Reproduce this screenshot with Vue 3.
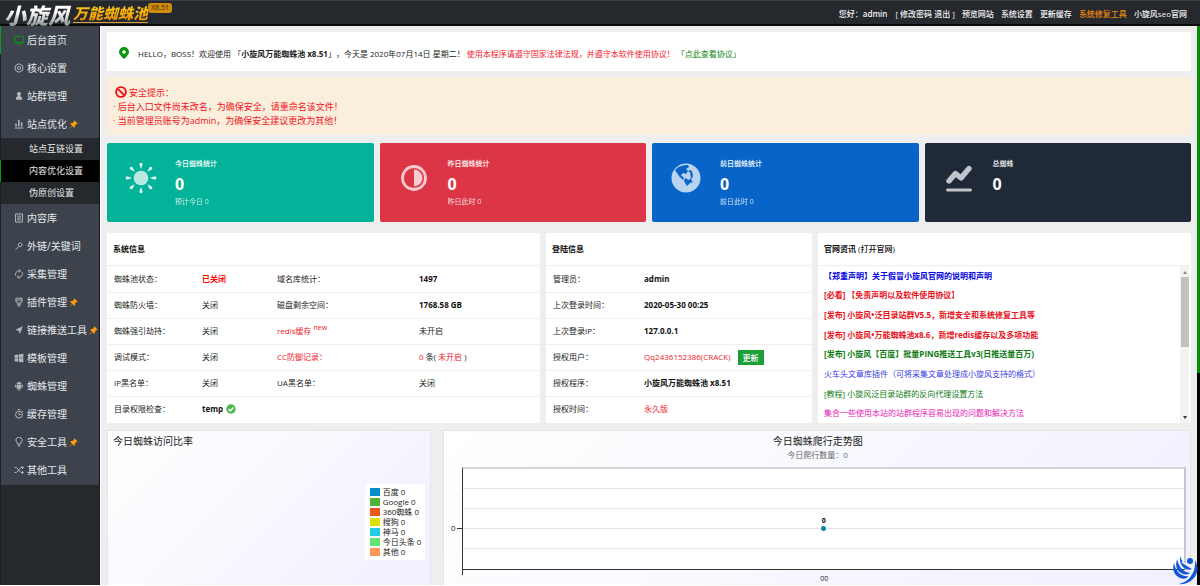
<script setup>
const menu = [
  { text: '后台首页', icon: 'screen', on: true },
  { text: '核心设置', icon: 'hex' },
  { text: '站群管理', icon: 'user' },
  { text: '站点优化', icon: 'bars', pin: true, children: ['站点互链设置', '内容优化设置', '伪原创设置'] },
  { text: '内容库', icon: 'doc' },
  { text: '外链/关键词', icon: 'key' },
  { text: '采集管理', icon: 'cycle' },
  { text: '插件管理', icon: 'plug', pin: true },
  { text: '链接推送工具', icon: 'send', pin: true },
  { text: '模板管理', icon: 'windows' },
  { text: '蜘蛛管理', icon: 'android' },
  { text: '缓存管理', icon: 'timer' },
  { text: '安全工具', icon: 'bulb', pin: true },
  { text: '其他工具', icon: 'shuffle' },
]

const stroked = {
  screen: 'M1 2H15V12H1ZM4 14.5H12',
  hex: 'M8 1L14 4.5V11.5L8 15L2 11.5V4.5ZM8 5.5A2.5 2.5 0 1 0 8 10.5A2.5 2.5 0 1 0 8 5.5',
  doc: 'M2.5 1.5H13.5V14.5H2.5ZM5 5H11M5 8H11M5 11H11',
  key: 'M10 3A3 3 0 1 1 10 9A3 3 0 1 1 10 3M8 8.5L2.5 14',
  cycle: 'M3 11A5.5 5.5 0 0 1 8 3H10M8 0.5L10.5 3L8 5.5M13 5A5.5 5.5 0 0 1 8 13H6M8 10.5L5.5 13L8 15.5',
  plug: 'M3 2H13V6Q13 10 8 10Q3 10 3 6ZM3 5H13M6 10V13H10V10M8 13V16',
  timer: 'M8 3.5A5.5 5.5 0 1 1 8 14.5A5.5 5.5 0 1 1 8 3.5M6 1H10M8 6V9H11M13 3L14.5 4.5',
  bulb: 'M5.5 11Q5.5 9.5 4 8A5 5 0 1 1 12 8Q10.5 9.5 10.5 11ZM6 13H10M7 15H9',
  shuffle: 'M1 4H4L11 12H15M1 12H4L11 4H15M12.5 1.5L15 4L12.5 6.5M12.5 9.5L15 12L12.5 14.5',
}
const filled = {
  user: 'M8 1.5A3.2 3.2 0 0 1 10 7.2V8.5Q13 9 13 12V14H3V12Q3 9 6 8.5V7.2A3.2 3.2 0 0 1 8 1.5Z',
  bars: 'M2 7H4.5V12H2ZM6.5 1H9V12H6.5ZM11 5H13.5V12H11ZM1 13.5H15V15H1Z',
  send: 'M14 2L9.5 14.5L7.5 9L2 7.5Z',
  windows: 'M1 3L7 2.2V7.5H1ZM8 2L15 1V7.5H8ZM1 8.5H7V13.8L1 13ZM8 8.5H15V15L8 14Z',
  android: 'M4 5Q4 1.5 8 1.5Q12 1.5 12 5ZM4 6H12V12H10V15H8.5V12H7.5V15H6V12H4ZM1.5 6H3V10.5H1.5ZM13 6H14.5V10.5H13Z',
}

const stats = [
  { title: '今日蜘蛛统计', value: 0, note: '预计今日 0', tone: 'teal', icon: 'sun' },
  { title: '昨日蜘蛛统计', value: 0, note: '昨日此时 0', tone: 'red', icon: 'half' },
  { title: '前日蜘蛛统计', value: 0, note: '前日此时 0', tone: 'blue', icon: 'globe' },
  { title: '总蜘蛛', value: 0, note: '', tone: 'navy', icon: 'line' },
]
const rays = [0, 45, 90, 135, 180, 225, 270, 315]

const news = [
  { text: '【郑重声明】关于假冒小旋风官网的说明和声明', tone: 'n-blue', bold: true },
  { text: '[必看] 【免责声明以及软件使用协议】', tone: 'n-red', bold: true },
  { text: '[发布] 小旋风•泛目录站群V5.5，新增安全和系统修复工具等', tone: 'n-red', bold: true },
  { text: '[发布] 小旋风•万能蜘蛛池x8.6，新增redis缓存以及多项功能', tone: 'n-red', bold: true },
  { text: '[发布] 小旋风【百度】批量PING推送工具v3(日推送量百万)', tone: 'n-green', bold: true },
  { text: '火车头文章库插件（可将采集文章处理成小旋风支持的格式）', tone: 'n-indigo' },
  { text: '[教程] 小旋风泛目录站群的反向代理设置方法', tone: 'n-green' },
  { text: '集合一些使用本站的站群程序容易出现的问题和解决方法', tone: 'n-pink' },
]

const legend = [
  { name: '百度', color: '#058dc7' },
  { name: 'Google', color: '#50b432' },
  { name: '360蜘蛛', color: '#ed561b' },
  { name: '搜狗', color: '#dddf00' },
  { name: '神马', color: '#24cbe5' },
  { name: '今日头条', color: '#64e572' },
  { name: '其他', color: '#ff9655' },
]
</script>

<template>
  <div class="page">
    <header class="top">
      <a class="logo" href="#">
        <span class="logo-main">小旋风</span>
        <span class="logo-sub">万能蜘蛛池</span>
        <span class="version">X8.51</span>
      </a>
      <nav class="top-nav">
        <span class="hello">您好：<b>admin</b></span>
        <span>[ <a href="#">修改密码</a> <a href="#">退出</a> ]</span>
        <a href="#">预览网站</a>
        <a href="#">系统设置</a>
        <a href="#">更新缓存</a>
        <a href="#" class="orange">系统修复工具</a>
        <a href="#">小旋风seo官网</a>
      </nav>
    </header>

    <div class="body">
      <aside class="side">
        <nav class="menu">
          <template v-for="m in menu" :key="m.text">
            <a href="#" class="item" :class="{ on: m.on }">
              <svg class="ico" viewBox="0 0 16 16" aria-hidden="true">
                <path v-if="stroked[m.icon]" :d="stroked[m.icon]" fill="none" stroke="currentColor" stroke-width="1.6" />
                <path v-else :d="filled[m.icon]" fill="currentColor" />
              </svg>
              <span>{{ m.text }}</span>
              <svg v-if="m.pin" class="pin" viewBox="0 0 16 16" aria-hidden="true">
                <path d="M9.5 0.5L15.5 6.5L14 7.5L13 7L10.5 10Q11 12 9.5 14L6 10.5L1 15.5L0.5 15L5.5 10L2 6.5Q4 5 6 5.5L9 3L8.5 2Z" fill="#ff9c0a" />
              </svg>
            </a>
            <div v-if="m.children" class="sub">
              <a v-for="(c, i) in m.children" :key="c" href="#" :class="{ active: i === 1 }">{{ c }}</a>
            </div>
          </template>
        </nav>
      </aside>

      <main class="main">
        <section class="welcome">
          <svg class="place" viewBox="0 0 20 24" aria-hidden="true">
            <path fill-rule="evenodd" d="M10 0A10 10 0 0 1 20 10Q20 15 10 24Q0 15 0 10A10 10 0 0 1 10 0ZM10 6.5A3.5 3.5 0 1 0 10 13.5A3.5 3.5 0 1 0 10 6.5Z" fill="#0a9410" />
          </svg>
          <p>HELLO，BOSS！欢迎使用 「<b>小旋风万能蜘蛛池 x8.51</b>」，今天是 2020年07月14日 星期二！ <span class="red-text">使用本程序请遵守国家法律法规，并遵守本软件使用协议！</span> <a href="#" class="green-text">「点此查看协议」</a></p>
        </section>

        <section class="alert">
          <p class="alert-title">
            <svg viewBox="0 0 16 16" aria-hidden="true">
              <path d="M8 1.5A6.5 6.5 0 1 1 8 14.5A6.5 6.5 0 1 1 8 1.5M3.5 3.5L12.5 12.5" fill="none" stroke="#f01018" stroke-width="2.6" />
            </svg>
            安全提示：
          </p>
          <p>· 后台入口文件尚未改名，为确保安全，请重命名该文件！</p>
          <p>· 当前管理员账号为admin，为确保安全建议更改为其他！</p>
        </section>

        <section class="stats">
          <article v-for="s in stats" :key="s.title" class="stat" :class="s.tone">
            <svg class="stat-ico" viewBox="0 0 32 32" aria-hidden="true">
              <g v-if="s.icon === 'sun'" fill="#fff">
                <circle cx="16" cy="16" r="7.3" opacity="0.72" />
                <path v-for="r in rays" :key="r" d="M16 7L14.6 3A1.6 1.6 0 1 1 17.4 3Z" :transform="`rotate(${r} 16 16)`" opacity="0.9" />
              </g>
              <g v-else-if="s.icon === 'half'" opacity="0.75">
                <circle cx="16" cy="16" r="11.5" fill="none" stroke="#fff" stroke-width="2.8" />
                <path d="M16 7.5A8.5 8.5 0 0 1 16 24.5Z" fill="#fff" />
              </g>
              <g v-else-if="s.icon === 'globe'">
                <circle cx="16" cy="16" r="14.5" fill="#b9d3f1" />
                <path d="M5 8Q9 3 18 3L19 5L16 7L18 9L16 12L13 11L11 13L14 16L13 18L9 14ZM19 8L22 9L23 14L21 18L23 20L20 21L17 24L14 19L15 16L19 18L18 12Z" fill="#0864c8" />
                <path d="M18 10H20L21 16L19 18L17 15Z" fill="#b9d3f1" />
              </g>
              <g v-else fill="none" stroke="#c2c6cc" stroke-linecap="round">
                <path d="M6 19L12.5 11.5L18 16L26 6.5" stroke-width="5.4" stroke-linejoin="round" />
                <path d="M4.5 28H27.5" stroke-width="3" />
              </g>
            </svg>
            <div class="stat-text">
              <h3>{{ s.title }}</h3>
              <strong>{{ s.value }}</strong>
              <small>{{ s.note }}</small>
            </div>
          </article>
        </section>

        <section class="panels">
          <article class="panel">
            <h2>系统信息</h2>
            <table class="sys">
              <tbody>
                <tr><td>蜘蛛池状态：</td><td><b class="pure-red">已关闭</b></td><td>域名库统计：</td><td><b>1497</b></td></tr>
                <tr><td>蜘蛛防火墙：</td><td>关闭</td><td>磁盘剩余空间：</td><td><b>1768.58 GB</b></td></tr>
                <tr><td>蜘蛛强引劫持：</td><td>关闭</td><td class="red-text">redis缓存 <sup>new</sup></td><td>未开启</td></tr>
                <tr><td>调试模式：</td><td>关闭</td><td class="red-text">CC防御记录：</td><td><span class="red-text">0</span> 条( <span class="red-text">未开启</span> )</td></tr>
                <tr><td>IP黑名单：</td><td>关闭</td><td>UA黑名单：</td><td>关闭</td></tr>
                <tr>
                  <td>目录权限检查：</td>
                  <td colspan="3">
                    <div class="check">
                      <b>temp</b>
                      <svg class="ok" viewBox="0 0 16 16" aria-hidden="true">
                        <circle cx="8" cy="8" r="7.5" fill="#4db848" />
                        <path d="M4 8L7 11L12 5.5" fill="none" stroke="#fff" stroke-width="2.4" />
                      </svg>
                    </div>
                  </td>
                </tr>
              </tbody>
            </table>
          </article>

          <article class="panel">
            <h2>登陆信息</h2>
            <table class="login">
              <tbody>
                <tr><td>管理员：</td><td><b>admin</b></td></tr>
                <tr><td>上次登录时间：</td><td><b>2020-05-30 00:25</b></td></tr>
                <tr><td>上次登录IP：</td><td><b>127.0.0.1</b></td></tr>
                <tr><td>授权用户：</td><td><div class="licence"><span class="red-text">Qq2436152386(CRACK)</span><button type="button">更新</button></div></td></tr>
                <tr><td>授权程序：</td><td><b>小旋风万能蜘蛛池 x8.51</b></td></tr>
                <tr><td>授权时间：</td><td class="red-text">永久版</td></tr>
              </tbody>
            </table>
          </article>

          <article class="panel">
            <h2>官网资讯 <a href="#">(打开官网)</a></h2>
            <div class="news">
              <ul>
                <li v-for="n in news" :key="n.text"><a href="#" :class="[n.tone, { bold: n.bold }]">{{ n.text }}</a></li>
              </ul>
              <div class="bar">
                <i class="arrow up"></i>
                <i class="thumb"></i>
                <i class="arrow down"></i>
              </div>
            </div>
          </article>
        </section>

        <section class="charts">
          <article class="chart ratio">
            <h2>今日蜘蛛访问比率</h2>
            <ul class="legend">
              <li v-for="l in legend" :key="l.name"><i :style="{ background: l.color }"></i>{{ l.name }} 0</li>
            </ul>
          </article>
          <article class="chart trend">
            <h2>今日蜘蛛爬行走势图</h2>
            <p>今日爬行数量：0</p>
            <div class="plot-row">
              <span class="y-label">0</span>
              <div class="plot">
                <i v-for="k in 5" :key="k" class="band"></i>
                <div class="point"><b>0</b><i></i></div>
              </div>
            </div>
            <span class="x-label">00</span>
          </article>
        </section>
      </main>
      <div class="rail"><i></i></div>
    </div>

    <svg class="helper" viewBox="0 0 26 30" aria-hidden="true">
      <g fill="#1458d8">
        <path d="M2 8Q-1 19 8 23Q14 25 18 21Q10 22 6 17Q3 13 2 8Z" />
        <path d="M5 4Q2 14 9 18Q14 21 18 18Q12 17 9 13Q6 9 5 4Z" />
        <path d="M8 1Q7 9 12 13Q16 16 20 14Q14 11 12 8Q9 5 8 1Z" />
        <path d="M23 5Q29 15 21 24Q15 30 7 29Q15 27 19 21Q24 14 23 5Z" />
      </g>
      <circle cx="18" cy="6" r="3" fill="#1458d8" />
      <path d="M10 7Q15 11 20 11Q22 17 15 24" fill="none" stroke="#fff" stroke-width="1.4" />
    </svg>
  </div>
</template>

<style>
body {
  margin: 0;
  background: #fff;
}
</style>

<style scoped>
* {
  box-sizing: border-box;
}
.page {
  position: relative;
  display: flex;
  flex-direction: column;
  height: calc(100vh - 1px);
  overflow: hidden;
  background: #eee;
  color: #222;
  font: 8px/14px "Open Sans", "Noto Sans CJK SC", sans-serif;
  text-spacing-trim: space-all;
}
h2, h3, p, ul {
  margin: 0;
  padding: 0;
  list-style: none;
}
a {
  color: inherit;
  text-decoration: none;
}
i {
  display: block;
}
.red-text { color: #f0222c; }
.green-text { color: #0a8a10; }
.pure-red { color: #f00; }

.top {
  display: flex;
  justify-content: space-between;
  align-items: center;
  flex: none;
  height: 26px;
  padding: 0 13px 0 4px;
  border-top: 1px solid #3b4046;
  border-bottom: 2px solid #0a0b0c;
  background: #25282c;
  color: #f2f2f2;
}
.logo {
  display: flex;
  align-items: center;
  padding-top: 2px;
  font-family: "Noto Sans CJK SC", sans-serif;
  font-weight: 900;
  font-style: italic;
}
.logo-main {
  padding-right: 3px;
  font-size: 22px;
  line-height: 24px;
  background: linear-gradient(#fff 40%, #8d9094);
  background-clip: text;
  color: transparent;
}
.logo-sub {
  border-bottom: 1px solid #d9a03c;
  font-size: 15px;
  line-height: 18px;
  background: linear-gradient(#ffd21a, #f08c00);
  background-clip: text;
  color: transparent;
}
.version {
  margin-bottom: 12px;
  padding: 0 3px;
  border-radius: 3px;
  background: #d08c0c;
  color: #3b2c0a;
  font-family: "Open Sans", sans-serif;
  font-size: 7px;
  font-weight: 400;
  font-style: normal;
  line-height: 10px;
}
.top-nav {
  display: flex;
  gap: 7px;
  padding-top: 3px;
  font-weight: 500;
}
.top-nav b { font-weight: 600; }
.hello { margin-right: 1px; }
.orange { color: #f08a10; }

.body {
  display: flex;
  flex: 1;
  min-height: 0;
}
.side {
  flex: none;
  width: 101px;
  border-right: 1px solid #fff;
  border-left: 1px solid #1d2126;
  background: #25282c;
}
.menu {
  padding-bottom: 1px;
  border-right: 1px solid #14171a;
  background: #3c434d;
  color: #e6e8ea;
}
.item {
  display: flex;
  align-items: center;
  height: 28px;
  padding-left: 13px;
  font-size: 10px;
}
.item.on {
  margin-left: -1px;
  padding-left: 13px;
  border-left: 1px solid #0a9a14;
}
.ico {
  width: 10px;
  height: 10px;
  margin-right: 3px;
  color: #b4b7ba;
}
.on .ico { color: #0a9a14; }
.pin {
  width: 9px;
  height: 9px;
  margin-left: 2px;
}
.sub a {
  display: block;
  padding-left: 28px;
  background: #25282c;
  font-size: 9px;
  line-height: 22px;
}
.sub .active {
  margin-left: -1px;
  border-left: 1px solid #0a9a14;
  background: #000;
}

.main {
  display: flex;
  flex-direction: column;
  flex: 1;
  min-width: 0;
  padding: 6px 6px 0;
}
.welcome {
  display: flex;
  align-items: center;
  flex: none;
  gap: 9px;
  height: 39px;
  padding: 5px 12px 0;
  background: #fff;
}
.place {
  width: 10px;
  height: 12px;
  margin-bottom: 3px;
}
.alert {
  flex: none;
  margin-top: 6px;
  padding: 9px 6px 7px;
  background: #faeedd;
  color: #f0141c;
  font-size: 9px;
}
.alert-title {
  display: flex;
  align-items: center;
  gap: 2px;
  padding-left: 2px;
}
.alert-title svg {
  width: 12px;
  height: 12px;
  margin-bottom: 2px;
}

.stats {
  display: grid;
  grid-template-columns: repeat(4, 1fr);
  flex: none;
  gap: 6px;
  margin-top: 8px;
}
.stat {
  display: flex;
  gap: 18px;
  height: 79px;
  padding: 14px 18px;
  border-radius: 2px;
  color: #fff;
}
.teal { background: #02b399; }
.red { background: #dc3646; }
.blue { background: #0864c8; }
.navy { background: #1f2937; }
.stat-ico {
  width: 32px;
  height: 32px;
  margin-top: 5px;
}
.stat-text {
  display: flex;
  flex-direction: column;
}
.stat h3 {
  font-size: 7px;
  font-weight: 500;
  line-height: 14px;
}
.stat strong {
  font-size: 16px;
  line-height: 26px;
}
.stat small {
  font-size: 7px;
  line-height: 10px;
  opacity: 0.8;
}

.panels {
  display: grid;
  grid-template-columns: 433fr 266fr 373fr;
  flex: none;
  gap: 6px;
  margin-top: 11px;
}
.panel {
  display: flex;
  flex-direction: column;
  min-width: 0;
  height: 190px;
  border-radius: 2px;
  background: #fff;
}
.panel h2 {
  padding: 0 6px;
  border-bottom: 1px solid #eee;
  color: #111;
  font-size: 8px;
  font-weight: 700;
  line-height: 32px;
}
.panel h2 a { font-weight: 500; }
table {
  width: 100%;
  table-layout: fixed;
  border-collapse: collapse;
}
td {
  height: 26px;
  padding: 0 7px;
  border-bottom: 1px solid #f0f0f0;
  white-space: nowrap;
}
tr:last-child td { border-bottom: 0; }
td b { color: #111; }
td b.pure-red { color: #f00; }
.sys tr:first-child td:nth-child(1) { width: 88px; }
.sys tr:first-child td:nth-child(2) { width: 75px; }
.sys tr:first-child td:nth-child(3) { width: 142px; }
.login tr:first-child td:first-child { width: 91px; }
sup {
  font-size: 7px;
  line-height: 7px;
}
.check {
  display: flex;
  align-items: center;
  gap: 3px;
}
.ok {
  width: 10px;
  height: 10px;
}
.licence {
  display: flex;
  align-items: center;
  gap: 7px;
}
button {
  padding: 0 5px;
  border: 0;
  background: #1d9f38;
  color: #fff;
  font: 500 8px/15px "Open Sans", "Noto Sans CJK SC", sans-serif;
}
.news {
  display: flex;
  flex: 1;
  min-height: 0;
  padding-right: 2px;
}
.news ul {
  display: flex;
  flex-direction: column;
  flex: 1;
  padding-left: 6px;
}
.news li {
  display: flex;
  align-items: center;
  flex: 1;
}
.bold { font-weight: 700; }
.n-blue { color: #0000e0; }
.n-red { color: #e8101a; }
.n-green { color: #0a7a10; }
.n-indigo { color: #3c3ce0; }
.n-pink { color: #e619b4; }
.bar {
  display: flex;
  flex-direction: column;
  align-items: center;
  width: 9px;
  padding: 5px 0 4px;
  background: #f3f3f3;
}
.arrow {
  border: 2px solid transparent;
}
.up { border-top: 0; border-bottom: 3px solid #888; }
.down { border-bottom: 0; border-top: 3px solid #333; margin-top: auto; }
.thumb {
  width: 8px;
  height: 70px;
  margin-top: 3px;
  background: #c1c1c1;
}

.charts {
  display: grid;
  grid-template-columns: 324fr 747fr;
  flex: 1;
  gap: 12px;
  min-height: 0;
  margin-top: 7px;
}
.chart {
  min-width: 0;
  border: 1px solid #e6e6e8;
  background: linear-gradient(135deg, #fff, #f0f0ff);
}
.chart h2 {
  font-size: 10px;
  font-weight: 400;
  line-height: 20px;
}
.ratio {
  display: flex;
  flex-direction: column;
  padding: 0 5px;
}
.legend {
  align-self: flex-end;
  margin-top: 33px;
  padding: 3px 4px 3px 5px;
  background: #fff;
}
.legend li {
  display: flex;
  align-items: center;
  gap: 3px;
  line-height: 10px;
}
.legend i {
  width: 10px;
  height: 8px;
}
.trend {
  display: flex;
  flex-direction: column;
  padding: 0 4px 0 5px;
  text-align: center;
}
.trend p {
  color: #666;
  line-height: 8px;
}
.plot-row {
  display: flex;
  margin-top: 8px;
}
.y-label {
  width: 8px;
  margin-top: 54px;
}
.plot-row::before {
  content: "";
  order: 1;
  width: 5px;
  height: 1px;
  margin-top: 61px;
  background: #333;
}
.plot {
  position: relative;
  order: 2;
  flex: 1;
  border-top: 2px solid #d4d4d8;
  border-right: 2px solid #c6c6d0;
  border-bottom: 1px solid #333;
  border-left: 1px solid #333;
  background: #fff;
}
.plot::after {
  content: "";
  position: absolute;
  top: 100%;
  left: -1px;
  width: 1px;
  height: 6px;
  background: #333;
}
.band {
  height: 20px;
  border-bottom: 1px solid #e4e4e4;
}
.band:nth-child(5) { border-bottom: 0; }
.point {
  position: absolute;
  top: 47px;
  left: 50%;
  width: 6px;
  margin-left: -3px;
  color: #000;
  font-size: 7px;
  line-height: 10px;
}
.point b { display: block; }
.point i {
  width: 5px;
  height: 5px;
  border-radius: 50%;
  background: #0a86a8;
}
.x-label {
  padding-left: 13px;
  font-size: 7px;
  line-height: 18px;
}

.rail {
  flex: none;
  width: 3px;
  background: #000;
}
.rail i {
  height: 62%;
  background: #0a8a0a;
}
.helper {
  position: absolute;
  right: 2px;
  bottom: 0;
  width: 26px;
  height: 30px;
}
</style>
